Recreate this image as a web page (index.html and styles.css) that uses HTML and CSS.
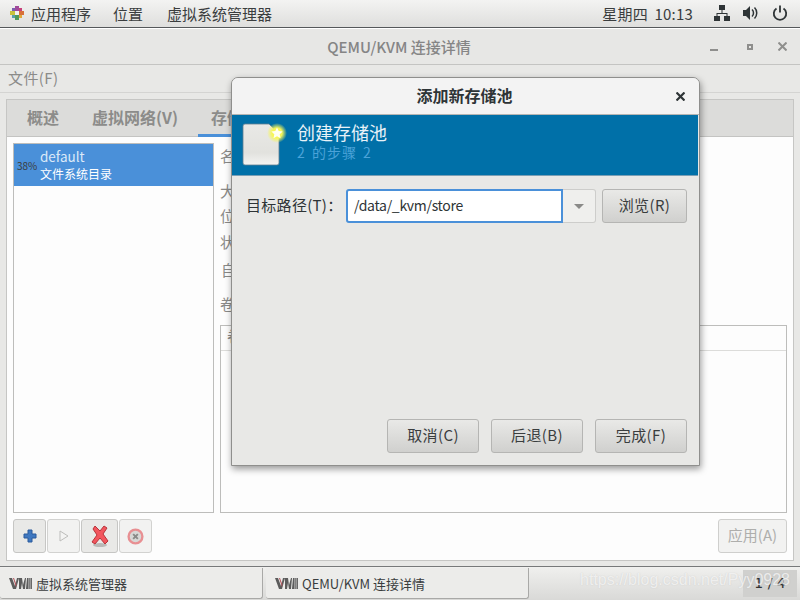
FILE: index.html
```html
<!DOCTYPE html>
<html lang="zh-CN">
<head>
  <meta charset="UTF-8">
  <title>QEMU/KVM 连接详情</title>
  <link rel="stylesheet" href="styles.css">
</head>
<body>

  <!-- Top panel -->
  <header class="panel">
    <div class="panel-menu">
      <svg class="foot" width="16" height="16" viewBox="0 0 16 16">
        <rect x="1" y="6" width="5" height="4" fill="#c9c23c"/>
        <rect x="10" y="6" width="5" height="4" fill="#d8703a"/>
        <rect x="6" y="1" width="4" height="5" fill="#a04a9a"/>
        <rect x="6" y="10" width="4" height="5" fill="#4f9a5a"/>
        <rect x="3" y="3" width="3" height="3" fill="#7a5fb0"/>
        <rect x="10" y="3" width="3" height="3" fill="#c8417a"/>
        <rect x="3" y="10" width="3" height="3" fill="#5aa0a8"/>
        <rect x="10" y="10" width="3" height="3" fill="#e0a83a"/>
        <rect x="6" y="6" width="4" height="4" fill="#f2f2f0"/>
      </svg>
      <span class="panel-apps">应用程序</span>
      <span class="panel-places">位置</span>
      <span>虚拟系统管理器</span>
    </div>
    <div class="panel-status">
      <span class="clock">星期四 10:13</span>
      <svg width="16" height="16" viewBox="0 0 16 16" fill="#2e3436">
        <rect x="5" y="0" width="6" height="5"/>
        <rect x="0" y="11" width="6" height="5"/>
        <rect x="10" y="11" width="6" height="5"/>
        <path d="M7.5 5h1v3h5v3h-1V9h-9v2h-1V8h5z"/>
      </svg>
      <svg width="16" height="16" viewBox="0 0 16 16" fill="#2e3436">
        <path d="M0 5h3l4-4v14l-4-4H0z"/>
        <path d="M9 4.500c2 1.800 2 5.200 0 7" fill="none" stroke="#2e3436" stroke-width="1.500"/>
        <path d="M11.500 2.500c3 3 3 8 0 11" fill="none" stroke="#2e3436" stroke-width="1.500"/>
      </svg>
      <svg width="16" height="16" viewBox="0 0 16 16" fill="none" stroke="#2e3436" stroke-width="1.800">
        <path d="M4.500 3.500a6.200 6.200 0 1 0 7 0"/>
        <path d="M8 0.500v7"/>
      </svg>
    </div>
  </header>

  <!-- Main window -->
  <main class="window">
    <div class="titlebar">
      <span class="title">QEMU/KVM 连接详情</span>
      <div class="win-controls">
        <span class="win-min"></span>
        <span class="win-max"></span>
        <svg width="9" height="9" viewBox="0 0 9 9" stroke="#8f8f8d" stroke-width="2"><path d="M0.500 0.500l8 8M8.500 0.500l-8 8"/></svg>
      </div>
    </div>
    <div class="menubar">文件(F)</div>

    <section class="notebook">
      <div class="tabs">
        <span class="tab tab-overview">概述</span>
        <span class="tab tab-net">虚拟网络(V)</span>
        <span class="tab tab-active">存储</span>
      </div>
      <div class="tab-body">
        <div class="columns">
          <div class="pool-list">
            <div class="pool-row">
              <span class="pool-pct">38%</span>
              <div>
                <div class="pool-name">default</div>
                <div class="pool-type">文件系统目录</div>
              </div>
            </div>
          </div>
          <div class="pool-detail">
            <div class="field field-name">名</div>
            <div class="field field-size">大</div>
            <div class="field field-loc">位</div>
            <div class="field field-state">状</div>
            <div class="field field-auto">自</div>
            <div class="field field-vol">卷</div>
            <div class="vol-table">
              <div class="vol-head">卷</div>
            </div>
          </div>
        </div>
        <div class="toolbar">
          <div class="tool-group">
            <button class="tool tool-add">
              <svg width="14" height="14" viewBox="0 0 14 14"><path d="M5 1h4v4h4v4H9v4H5V9H1V5h4z" fill="#3f78c0" stroke="#2a5a9c"/></svg>
            </button>
            <button class="tool tool-play tool-off">
              <svg width="10" height="12" viewBox="0 0 10 12"><path d="M1 1l8 5-8 5z" fill="#f4f4f3" stroke="#bdbdbb"/></svg>
            </button>
            <button class="tool tool-del">
              <svg width="18" height="22" viewBox="0 0 18 22">
                <ellipse cx="9" cy="20" rx="7" ry="2" fill="#9a9a98" opacity="0.6"/>
                <path d="M4 1l5 5 4-5 3 2-4 6 5 7-3 3-5-6-5 6-3-2 5-7-4-6z" fill="#f2565e" stroke="#b8343a"/>
              </svg>
            </button>
            <button class="tool tool-stop tool-off">
              <svg width="17" height="17" viewBox="0 0 16 16"><circle cx="8" cy="8" r="6.500" fill="#d8d8d6" stroke="#e88f92" stroke-width="2.200"/><path d="M5.800 5.800l4.400 4.400M10.200 5.800l-4.400 4.400" stroke="#8a8a88" stroke-width="1.800"/></svg>
            </button>
          </div>
          <button class="btn-apply">应用(A)</button>
        </div>
      </div>
    </section>
  </main>

  <!-- Task bar -->
  <footer class="taskbar">
    <div class="task">
      <svg class="vm-logo" width="23" height="11" viewBox="0 0 23 11" fill="#5c5c5c">
        <path d="M0 0h3l3 8 2-8h2L7 11H4z"/>
        <path d="M4 0h1l2.500 7L7 9z" fill="#b4545c"/>
        <path d="M10 0h3l1 7 2-7h1l-1 11h-2l-1-6-1 6h-2z"/>
        <path d="M18 0h5v11h-6z"/>
        <path d="M19.500 0h.8v11h-.8zM21.500 0h.6v11h-.6z" fill="#d8d8d6"/>
      </svg>
      <span>虚拟系统管理器</span>
    </div>
    <div class="task">
      <svg class="vm-logo" width="23" height="11" viewBox="0 0 23 11" fill="#5c5c5c">
        <path d="M0 0h3l3 8 2-8h2L7 11H4z"/>
        <path d="M4 0h1l2.500 7L7 9z" fill="#b4545c"/>
        <path d="M10 0h3l1 7 2-7h1l-1 11h-2l-1-6-1 6h-2z"/>
        <path d="M18 0h5v11h-6z"/>
        <path d="M19.500 0h.8v11h-.8zM21.500 0h.6v11h-.6z" fill="#d8d8d6"/>
      </svg>
      <span>QEMU/KVM 连接详情</span>
    </div>
    <div class="pager">1 / 4</div>
  </footer>
  <div class="watermark">https://blog.csdn.net/Pyy0928</div>

  <!-- Add pool dialog -->
  <div class="dialog">
    <div class="dialog-title">
      <span>添加新存储池</span>
      <svg class="dialog-close" width="9" height="9" viewBox="0 0 9 9" stroke="#2e3436" stroke-width="2.200"><path d="M0.500 0.500l8 8M8.500 0.500l-8 8"/></svg>
    </div>
    <div class="banner">
      <div class="banner-icon">
        <svg width="46" height="44" viewBox="0 0 46 44">
          <defs>
            <linearGradient id="sheet" x1="0" y1="0" x2="0" y2="1">
              <stop offset="0" stop-color="#e9e9e6"/>
              <stop offset="0.700" stop-color="#e2e2de"/>
              <stop offset="1" stop-color="#f4f4f2"/>
            </linearGradient>
            <radialGradient id="glow">
              <stop offset="0.500" stop-color="#f6f65a"/>
              <stop offset="1" stop-color="#f6f65a" stop-opacity="0"/>
            </radialGradient>
          </defs>
          <path d="M2 3q0-2 2-2h24l10 10v29q0 2-2 2H4q-2 0-2-2z" fill="url(#sheet)" stroke="#5f7f8f" stroke-width="0.800"/>
          <circle cx="36" cy="10" r="10" fill="url(#glow)"/>
          <path d="M36 4.500l1.700 3.600 3.900.5-2.900 2.700.8 3.900-3.500-2-3.500 2 .8-3.900-2.900-2.700 3.900-.5z" fill="#fffff2"/>
        </svg>
      </div>
      <div class="banner-text">
        <div class="banner-title">创建存储池</div>
        <div class="banner-step">2 的步骤 2</div>
      </div>
    </div>
    <div class="dialog-body">
      <div class="path-row">
        <label class="path-label">目标路径(T)：</label>
        <div class="combo">
          <input class="path-input" type="text" value="/data/_kvm/store">
          <span class="combo-arrow"></span>
        </div>
        <button class="btn btn-browse">浏览(R)</button>
      </div>
      <div class="dialog-actions">
        <button class="btn">取消(C)</button>
        <button class="btn">后退(B)</button>
        <button class="btn">完成(F)</button>
      </div>
    </div>
  </div>

</body>
</html>
```

FILE: styles.css
```css
/* Global */
* {
  margin: 0;
  padding: 0;
  box-sizing: border-box;
}

html, body {
  width: 800px;
  height: 600px;
  overflow: hidden;
}

body {
  font-family: "Noto Sans CJK SC", "Noto Sans", sans-serif;
  font-size: 15px;
  color: #2e3436;
  background: #f2f2f0;
  display: flex;
  flex-direction: column;
  position: relative;
}

button, input {
  font-family: inherit;
  font-size: 15px;
  color: inherit;
}

/* Top panel */
.panel {
  height: 29px;
  flex: none;
  display: flex;
  justify-content: space-between;
  align-items: center;
  padding: 0 12px 2px 9px;
  background: linear-gradient(#f3f3f2, #dededc);
  box-shadow: inset 0 -1px 0 #55585a;
  border-bottom: 1px solid #fff;
  color: #3a3d3e;
}

.panel-menu {
  display: flex;
  align-items: center;
}

.foot {
  margin-right: 6px;
}

.panel-apps {
  margin-right: 22px;
}

.panel-places {
  margin-right: 24px;
}

.panel-status {
  display: flex;
  align-items: center;
  gap: 13px;
}

.clock {
  margin-right: 8px;
  letter-spacing: 0.2px;
  word-spacing: 3px;
}

/* Main window */
.window {
  flex: 1;
  min-height: 0;
  display: flex;
  flex-direction: column;
  background: #e8e8e6;
}

.titlebar {
  height: 36px;
  flex: none;
  position: relative;
  display: flex;
  align-items: center;
  justify-content: center;
  background: #e7e7e5;
  border-bottom: 1px solid #c4c4c2;
  color: #858585;
}

.title {
  font-weight: 500;
  padding-right: 2px;
}

.win-controls {
  position: absolute;
  right: 13px;
  top: 13px;
  display: flex;
  align-items: center;
  gap: 25px;
}

.win-min {
  width: 8px;
  height: 2px;
  background: #8f8f8d;
  margin-top: 7px;
}

.win-max {
  width: 6px;
  height: 6px;
  border: 2px solid #8f8f8d;
  margin-left: 4px;
}

.menubar {
  height: 28px;
  flex: none;
  padding: 2px 8px 0;
  letter-spacing: 0.4px;
  color: #8b8b89;
  background: #e8e8e6;
  border-bottom: 1px solid #d4d4d2;
}

/* Notebook */
.notebook {
  margin: 6px 6px 0;
  height: 462px;
  border: 1px solid #c6c6c4;
  display: flex;
  flex-direction: column;
  background: #fff;
}

.tabs {
  height: 37px;
  flex: none;
  display: flex;
  background: #dcdcda;
  border-bottom: 1px solid #c4c4c2;
  font-weight: 700;
  font-size: 16px;
  color: #8c8c8a;
}

.tab {
  padding-top: 5px;
}

.tab-overview {
  margin-left: 20px;
  margin-right: 33px;
}

.tab-net {
  margin-right: 20px;
}

.tab-active {
  padding: 5px 13px 0;
  width: 100px;
  border-bottom: 3px solid #4a90d9;
  height: 37px;
}

.tab-body {
  flex: 1;
  min-height: 0;
  padding: 6px 6px 6px;
  display: flex;
  flex-direction: column;
  background: #fdfdfd;
}

.columns {
  flex: 1;
  min-height: 0;
  display: flex;
  gap: 6px;
}

.pool-list {
  width: 201px;
  flex: none;
  background: #fdfdfd;
  border: 1px solid #bdbdbb;
}

.pool-row {
  height: 42px;
  display: flex;
  align-items: center;
  background: #4a90d9;
  color: #fff;
  font-size: 12px;
  line-height: 17px;
}

.pool-pct {
  width: 26px;
  padding-left: 3px;
  font-size: 10px;
  color: #3a3a3a;
  flex: none;
}

.pool-name {
  font-size: 13.500px;
  color: #dbe9f8;
}

/* Detail labels, mostly hidden behind the dialog */
.pool-detail {
  flex: 1;
  display: flex;
  flex-direction: column;
  color: #8a8a88;
}

.field {
  height: 20px;
  line-height: 20px;
}

.field-name {
  margin-top: 3px;
}

.field-size {
  margin-top: 15px;
}

.field-loc {
  margin-top: 5px;
}

.field-state {
  margin-top: 6px;
}

.field-auto {
  margin-top: 8px;
  margin-left: 1px;
}

.field-vol {
  margin-top: 14px;
}

.vol-table {
  flex: 1;
  margin-top: 11px;
  border: 1px solid #bdbdbb;
  background: #fdfdfd;
}

.vol-head {
  height: 25px;
  padding: 0 6px;
  line-height: 20px;
  border-bottom: 1px solid #dcdcda;
}

/* Toolbar under the lists */
.toolbar {
  flex: none;
  height: 35px;
  margin-top: 6px;
  display: flex;
  justify-content: space-between;
}

.tool-group {
  display: flex;
}

.tool {
  height: 34px;
  display: flex;
  align-items: center;
  justify-content: center;
  border: 1px solid #c6c6c4;
  border-radius: 3px;
  background: #e9e9e7;
}

.tool-off {
  background: #f2f2f1;
  border-color: #d2d2d0;
}

.tool-add {
  width: 33px;
}

.tool-play {
  width: 33px;
  margin-left: 1px;
}

.tool-del {
  width: 37px;
  margin-left: 1px;
}

.tool-stop {
  width: 33px;
  margin-left: 1px;
}

.btn-apply {
  width: 69px;
  height: 34px;
  padding-bottom: 3px;
  border: 1px solid #cfcfcd;
  border-radius: 3px;
  background: #f2f2f1;
  color: #aeaeac;
}

/* Task bar */
.taskbar {
  height: 34px;
  flex: none;
  display: flex;
  gap: 3px;
  padding-top: 1px;
  background: linear-gradient(#f0f0ee, #d9d9d7);
  border-top: 1px solid #77797a;
  position: relative;
}

.task {
  width: 263px;
  height: 31px;
  padding-left: 9px;
  display: flex;
  align-items: center;
  gap: 4px;
  border: 1px solid #a9a9a7;
  border-width: 0 1px 1px 0;
  border-radius: 0 0 3px 3px;
  background: #ececea;
  font-size: 13px;
  color: #3a3d3e;
}

.vm-logo {
  flex: none;
}

.pager {
  position: absolute;
  right: 3px;
  top: 3px;
  width: 54px;
  height: 27px;
  line-height: 27px;
  text-align: center;
  background: #d0d0ce;
  color: #333;
  font-family: "DejaVu Sans", sans-serif;
  font-size: 14px;
}

.watermark {
  position: absolute;
  right: 10px;
  top: 571px;
  font-family: "Liberation Sans", sans-serif;
  font-size: 16px;
  color: rgba(255, 255, 255, 0.7);
  text-shadow: 0 0 1px rgba(170, 170, 170, 0.5);
}

/* Dialog */
.dialog {
  position: absolute;
  left: 231px;
  top: 77px;
  width: 469px;
  height: 389px;
  display: flex;
  flex-direction: column;
  background: #e8e8e6;
  border: 1px solid #8f8f8d;
  border-radius: 7px 7px 0 0;
  box-shadow: 1px 3px 7px rgba(0, 0, 0, 0.4);
}

.dialog-title {
  height: 37px;
  flex: none;
  position: relative;
  display: flex;
  align-items: center;
  justify-content: center;
  background: #f3f3f3;
  border-bottom: 1px solid #b5b5b3;
  border-radius: 6px 6px 0 0;
  font-weight: 700;
  font-size: 16px;
  padding: 0 2px 3px 0;
}

.dialog-close {
  position: absolute;
  right: 14px;
  top: 14px;
}

.banner {
  height: 61px;
  flex: none;
  display: flex;
  align-items: center;
  background: #0070a8;
  color: #fff;
  margin-right: 1px;
  border-bottom: 1px solid #7a9fb5;
}

.banner-icon {
  width: 65px;
  padding-left: 9px;
  flex: none;
  height: 44px;
}

.banner-text {
  padding-bottom: 8px;
}

.banner-title {
  font-size: 18px;
  line-height: 22px;
  color: #e8f2f8;
}

.banner-step {
  font-size: 14px;
  line-height: 18px;
  letter-spacing: 1px;
  word-spacing: 2px;
  color: #4ba3d8;
}

.dialog-body {
  flex: 1;
  display: flex;
  flex-direction: column;
  justify-content: space-between;
  padding: 13px 12px 12px 14px;
}

.path-row {
  display: flex;
  align-items: center;
}

.path-label {
  width: 100px;
  flex: none;
  padding-bottom: 3px;
  letter-spacing: 0.3px;
}

.combo {
  display: flex;
  width: 250px;
  height: 34px;
  margin-right: 6px;
}

.path-input {
  width: 217px;
  height: 34px;
  padding: 0 6px 2px;
  border: 2px solid #4a90d9;
  border-radius: 3px 0 0 3px;
  background: #fff;
  font-size: 14px;
  letter-spacing: -0.3px;
  outline: none;
}

.combo-arrow {
  width: 33px;
  position: relative;
  background: #efefed;
  border: 1px solid #cdcdcb;
  border-left: 0;
  border-radius: 0 3px 3px 0;
}

.combo-arrow::after {
  content: "";
  position: absolute;
  left: 11px;
  top: 14px;
  border: 5px solid transparent;
  border-top: 5px solid #8a8a88;
}

.btn {
  width: 92px;
  height: 34px;
  padding-bottom: 3px;
  border: 1px solid #b5b5b3;
  border-radius: 3px;
  background: linear-gradient(#e9e9e7, #d0d0ce);
  color: #3a3d3e;
  letter-spacing: 0.4px;
}

.btn-browse {
  width: 85px;
}

.dialog-actions {
  display: flex;
  justify-content: flex-end;
  gap: 12px;
}
```
